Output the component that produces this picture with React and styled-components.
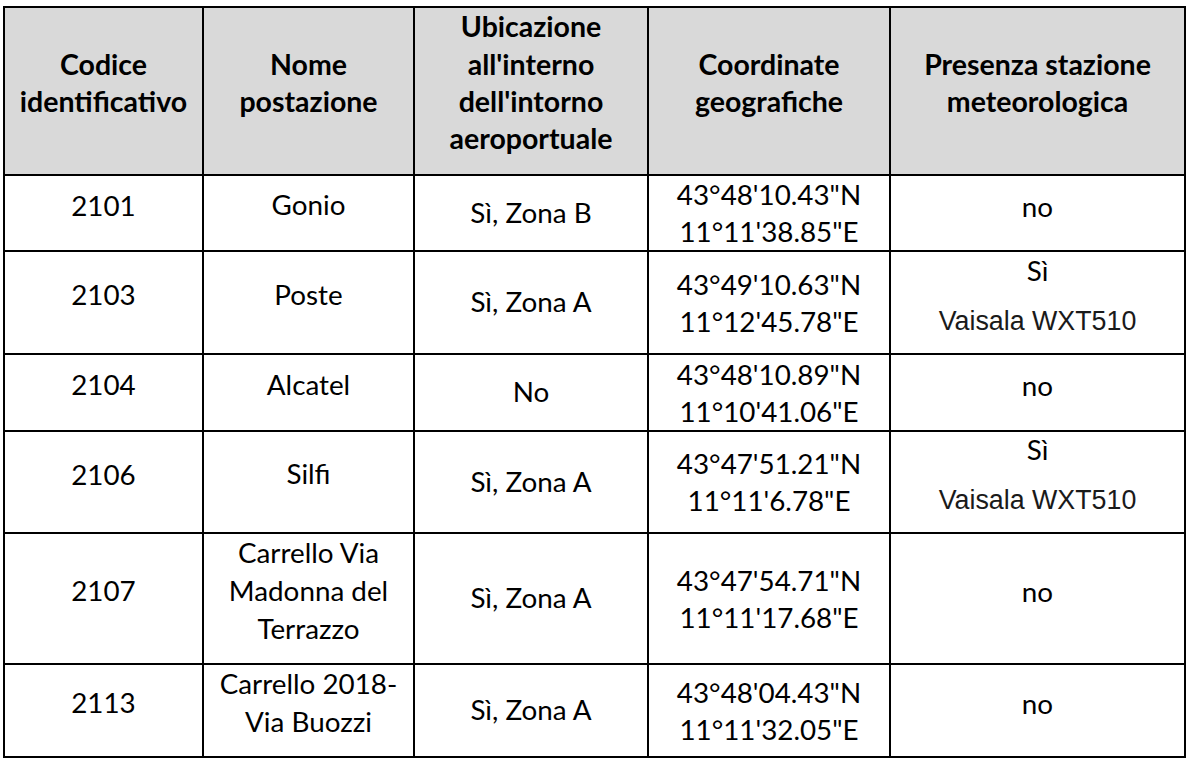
import React from "react";
import styled, { createGlobalStyle } from "styled-components";

const GlobalStyle = createGlobalStyle`
  html, body {
    margin: 0;
    padding: 0;
    background: #ffffff;
  }
  body {
    font-family: Lato, "Open Sans", sans-serif;
    color: #000;
  }
`;

const Page = styled.div`
  padding: 6px 0 0 3px;
`;

const Table = styled.table`
  border-collapse: collapse;
  table-layout: fixed;
  width: 1181px;
`;

const HeadRow = styled.tr`
  height: 168px;
  background: #d9d9d9;
`;

const Row = styled.tr`
  height: ${(p) => p.$h}px;
`;

const HeadCell = styled.th`
  border: 2px solid #000;
  padding: 0 4px;
  font-family: Lato, sans-serif;
  font-weight: 700;
  font-size: 28.5px;
  line-height: 37.4px;
  text-align: center;
  vertical-align: middle;
`;

const Cell = styled.td`
  border: 2px solid #000;
  padding: 0 4px;
  font-family: Lato, sans-serif;
  font-size: 27.8px;
  line-height: 37px;
  text-align: center;
  vertical-align: middle;
`;

// moves the content up inside its cell without changing the cell height
const Inner = styled.div`
  margin-top: ${(p) => -(p.$up || 0)}px;
  margin-bottom: ${(p) => p.$up || 0}px;
`;

const Line = styled.div`
  white-space: nowrap;
  line-height: ${(p) => p.$lh || 37}px;
`;

const Station = styled.div`
  display: flex;
  flex-direction: column;
  align-items: center;
  gap: 14px;
  line-height: 36px;
`;

const Model = styled.span`
  font-family: "Liberation Sans", Arial, sans-serif;
  font-size: 26.8px;
  color: #1a1a1a;
`;

const rows = [
  { h: 76, code: "2101", name: ["Gonio"], zone: "Sì, Zona B", coords: ["43°48'10.43\"N", "11°11'38.85\"E"], meteo: null },
  { h: 103, code: "2103", name: ["Poste"], zone: "Sì, Zona A", coords: ["43°49'10.63\"N", "11°12'45.78\"E"], meteo: "Vaisala WXT510" },
  { h: 77, code: "2104", name: ["Alcatel"], zone: "No", coords: ["43°48'10.89\"N", "11°10'41.06\"E"], meteo: null },
  { h: 102, code: "2106", name: ["Silfi"], zone: "Sì, Zona A", coords: ["43°47'51.21\"N", "11°11'6.78\"E"], meteo: "Vaisala WXT510" },
  { h: 131, code: "2107", name: ["Carrello Via", "Madonna del", "Terrazzo"], zone: "Sì, Zona A", coords: ["43°47'54.71\"N", "11°11'17.68\"E"], meteo: null },
  { h: 93, code: "2113", name: ["Carrello 2018-", "Via Buozzi"], zone: "Sì, Zona A", coords: ["43°48'04.43\"N", "11°11'32.05\"E"], meteo: null },
];

const headers = [
  ["Codice", "identificativo"],
  ["Nome", "postazione"],
  ["Ubicazione", "all'interno", "dell'intorno", "aeroportuale"],
  ["Coordinate", "geografiche"],
  ["Presenza stazione", "meteorologica"],
];

export default function App() {
  return (
    <Page>
      <GlobalStyle />
      <Table>
        <colgroup>
          <col style={{ width: 199 }} />
          <col style={{ width: 211 }} />
          <col style={{ width: 234 }} />
          <col style={{ width: 242 }} />
          <col style={{ width: 295 }} />
        </colgroup>
        <thead>
          <HeadRow>
            {headers.map((lines, i) => (
              <HeadCell key={i}>
                <Inner $up={8}>
                  {lines.map((l) => (
                    <Line key={l} $lh={37.4}>
                      {l}
                    </Line>
                  ))}
                </Inner>
              </HeadCell>
            ))}
          </HeadRow>
        </thead>
        <tbody>
          {rows.map((r) => (
            <Row key={r.code} $h={r.h}>
              <Cell>
                <Inner $up={8}>{r.code}</Inner>
              </Cell>
              <Cell>
                <Inner $up={8}>
                  {r.name.map((l) => (
                    <Line key={l} $lh={38}>
                      {l}
                    </Line>
                  ))}
                </Inner>
              </Cell>
              <Cell>
                <Inner $up={1}>{r.zone}</Inner>
              </Cell>
              <Cell>
                <Inner>
                  {r.coords.map((l) => (
                    <Line key={l}>{l}</Line>
                  ))}
                </Inner>
              </Cell>
              <Cell>
                <Inner $up={7}>
                  {r.meteo ? (
                    <Station>
                      <span>Sì</span>
                      <Model>{r.meteo}</Model>
                    </Station>
                  ) : (
                    "no"
                  )}
                </Inner>
              </Cell>
            </Row>
          ))}
        </tbody>
      </Table>
    </Page>
  );
}
